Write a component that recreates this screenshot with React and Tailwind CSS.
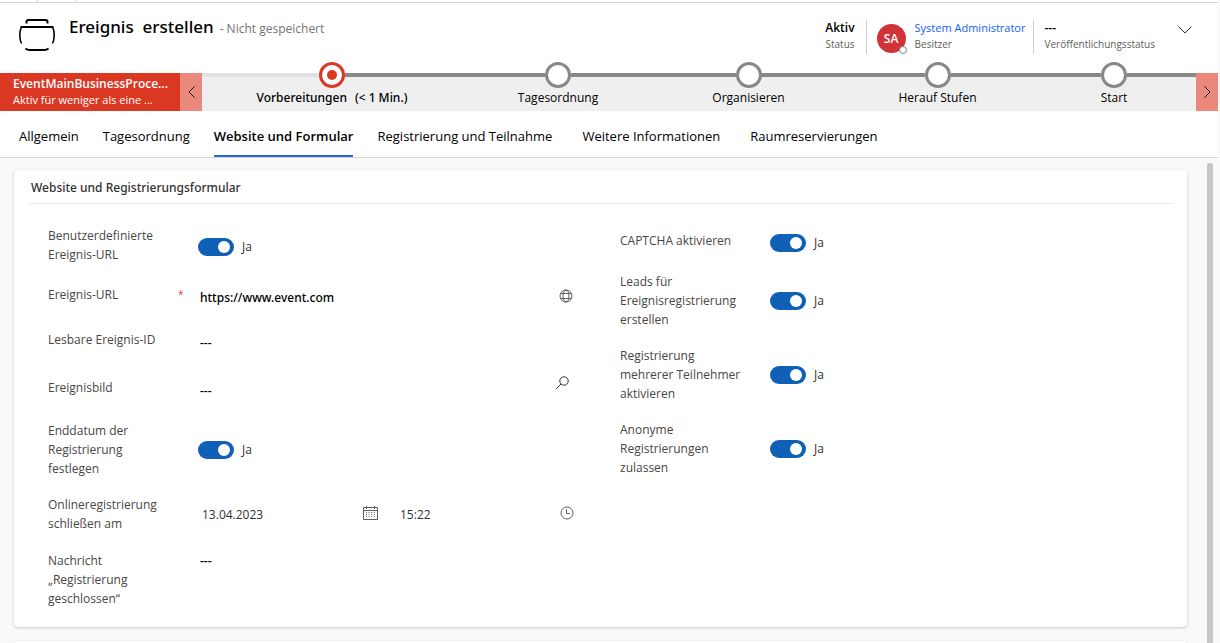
import { useState } from 'react';

const tabs = [
  { name: 'Allgemein', gap: 'mr-6' },
  { name: 'Tagesordnung', gap: 'mr-6' },
  { name: 'Website und Formular', gap: 'mr-6' },
  { name: 'Registrierung und Teilnahme', gap: 'mr-[30px]' },
  { name: 'Weitere Informationen', gap: 'mr-[30px]' },
  { name: 'Raumreservierungen', gap: '' },
];

const stages = [
  { name: 'Vorbereitungen', duration: '(< 1 Min.)', active: true },
  { name: 'Tagesordnung' },
  { name: 'Organisieren' },
  { name: 'Herauf Stufen' },
  { name: 'Start' },
];

export default function App() {
  const [activeTab, setActiveTab] = useState('Website und Formular');

  return (
    <div className="flex flex-col h-screen overflow-hidden bg-white border-r-2 border-[#faf9f8] font-['Open_Sans','Noto_Sans',sans-serif] text-xs text-[#323130]">
      <div className="flex shrink-0 h-[3px] border-b border-[#d6d6d6]">
        <div className="w-[38px] border-r border-[#d6d6d6]" />
        <div className="w-[39px] border-r border-[#d6d6d6]" />
      </div>

      <RecordHeader />
      <ProcessBar />

      <nav className="flex shrink-0 h-[47px] pl-[19px] border-b border-[#d6d6d6]">
        {tabs.map((tab) => (
          <button
            key={tab.name}
            onClick={() => setActiveTab(tab.name)}
            className={`h-[46px] pt-2 border-b-2 text-[13px] text-black whitespace-nowrap ${tab.gap} ${activeTab === tab.name ? 'border-[#2266e3] font-semibold' : 'border-transparent'}`}
          >
            {tab.name}
          </button>
        ))}
      </nav>

      <main className="flex flex-1 min-h-0 bg-[#faf9f8]">
        <div className="flex-1 min-w-0 pt-3 pl-[14px] pr-5 overflow-hidden">
          <FormSection />
          <div className="mt-[14px] h-10 bg-white rounded shadow-[0_1px_3px_rgba(0,0,0,0.2)]" />
        </div>
        <div className="w-[6px] mt-[5px] mr-[5px] bg-[#c8c6c4] rounded-t-full" />
      </main>
    </div>
  );
}

function RecordHeader() {
  return (
    <header className="flex shrink-0 items-start h-[70px] pl-[19px] pr-[26px]">
      <svg className="w-9 h-[33px] mt-4" viewBox="0 0 36 33" fill="none" stroke="#000">
        <path d="M7.500 4.500V3Q7.500 1 9.500 1H26.500Q28.500 1 28.500 3V4.500" strokeWidth="2" />
        <path d="M1.500 8H34.500" strokeWidth="2" />
        <path d="M2.500 8C1 11 0.800 13 0.800 16C0.800 19 1.200 22 2.500 24.500M33.500 8C35 11 35.200 13 35.200 16C35.200 19 34.800 22 33.500 24.500" strokeWidth="1.600" />
        <path d="M6.500 29.500Q8 31 11 31H25Q28 31 29.500 29.500" strokeWidth="1.800" />
      </svg>
      <h1 className="flex items-baseline ml-[14px] mt-[11px] leading-[26px] whitespace-pre">
        <span className="text-[17px] font-['Noto_Sans'] font-medium text-black">Ereignis  erstellen</span>
        <span className="ml-[6px] text-xs text-[#767472]">- Nicht gespeichert</span>
      </h1>

      <div className="flex ml-auto mt-[17px] h-[34px] leading-4 text-[10px] text-[#605e5c]">
        <div className="pr-[11px] border-r border-[#d2d0ce] text-right">
          <p className="text-xs leading-4 font-semibold text-black">Aktiv</p>
          <p>Status</p>
        </div>
        <div className="flex pl-[10px] pr-2 border-r border-[#d2d0ce]">
          <div className="relative flex items-center justify-center w-[29px] h-[29px] mt-1 mr-[9px] rounded-full bg-[#d13438] text-xs font-semibold text-white">
            SA
            <span className="absolute -right-[1px] -bottom-[1px] w-2 h-2 rounded-full border border-[#8a8886] bg-white" />
          </div>
          <div>
            <a href="#owner" className="block text-[11px] leading-4 text-[#1160f7]">System Administrator</a>
            <p>Besitzer</p>
          </div>
        </div>
        <div className="pl-[10px]">
          <p className="text-xs leading-4 font-semibold text-black">---</p>
          <p>Veröffentlichungsstatus</p>
        </div>
      </div>
      <button aria-label="Kopfzeile erweitern" className="ml-[23px] mt-[23px]">
        <svg className="w-[14px] h-2" viewBox="0 0 14 8" fill="none" stroke="#323130">
          <path d="M0.500 0.500L7 7L13.500 0.500" />
        </svg>
      </button>
    </header>
  );
}

function ProcessBar() {
  return (
    <div className="flex shrink-0 h-[38px] bg-[#efefef]">
      <div className="w-[180px] shrink-0 pl-[13px] pt-[3px] bg-[#db3823] text-white whitespace-nowrap">
        <p className="text-xs leading-4 font-semibold">EventMainBusinessProce...</p>
        <p className="text-[11px] leading-4">Aktiv für weniger als eine ...</p>
      </div>
      <button aria-label="Zurück" className="flex items-center justify-center w-[22px] bg-[#ea887b]">
        <svg className="w-[7px] h-3" viewBox="0 0 7 12" fill="none" stroke="#000">
          <path d="M6.500 0.500L1 6L6.500 11.500" />
        </svg>
      </button>
      <ol className="grid flex-1 grid-cols-[260fr_192fr_189fr_189fr_164fr]">
        {stages.map((stage) => (
          <li key={stage.name} className="flex flex-col items-center -mt-[11px]">
            <div className="flex items-center w-full h-[26px]">
              <div className={`flex-1 h-1 ${stage.active ? 'bg-[#e1e1e1]' : 'bg-[#8a8886]'}`} />
              <button
                aria-label={stage.name}
                className={`flex items-center justify-center w-[26px] h-[26px] rounded-full bg-white border-[3px] ${stage.active ? 'border-[#db3823]' : 'border-[#8a8886]'}`}
              >
                {stage.active && <span className="w-[10px] h-[10px] rounded-full bg-[#db3823]" />}
              </button>
              <div className="flex-1 h-1 bg-[#8a8886]" />
            </div>
            <p className="flex gap-2 leading-5 text-black whitespace-nowrap">
              <span className={stage.active ? "font-['Noto_Sans'] font-medium" : ''}>{stage.name}</span>
              {stage.duration && <span className="font-['Noto_Sans'] font-medium">{stage.duration}</span>}
            </p>
          </li>
        ))}
      </ol>
      <button aria-label="Weiter" className="flex items-center justify-center w-[22px] bg-[#ea887b]">
        <svg className="w-[7px] h-3" viewBox="0 0 7 12" fill="none" stroke="#000">
          <path d="M0.500 0.500L6 6L0.500 11.500" />
        </svg>
      </button>
    </div>
  );
}

function FormSection() {
  return (
    <section className="pl-[15px] pr-[14px] pt-2 pb-[19px] bg-white rounded shadow-[0_1px_3px_rgba(0,0,0,0.2)]">
      <h2 className="h-[26px] pl-[2px] leading-5 text-xs font-['Noto_Sans'] font-medium border-b border-[#edebe9]">
        Website und Registrierungsformular
      </h2>
      <form className="grid grid-cols-2">
        <div className="flex flex-col gap-[17px] pt-[22px] pl-[19px] pr-5">
          <Field id="custom-url" label="Benutzerdefinierte Ereignis-URL" height="min-h-[42px]">
            <Toggle id="custom-url" />
          </Field>
          <Field id="event-url" label="Ereignis-URL" height="min-h-[28px]" align="items-start" required>
            <TextInput id="event-url" value="https://www.event.com" />
            <button type="button" aria-label="URL öffnen" className="mt-1 mr-2">
              <GlobeIcon />
            </button>
          </Field>
          <Field id="readable-id" label="Lesbare Ereignis-ID" height="min-h-[31px]" align="items-start">
            <TextInput id="readable-id" value="---" />
          </Field>
          <Field id="image" label="Ereignisbild" height="min-h-[26px]" align="items-start">
            <TextInput id="image" value="---" />
            <button type="button" aria-label="Suchen" className="mr-3 -mt-[2px]">
              <SearchIcon />
            </button>
          </Field>
          <Field id="end-date" label="Enddatum der Registrierung festlegen" height="min-h-[57px]">
            <Toggle id="end-date" />
          </Field>
          <Field id="close-date" label="Onlineregistrierung schließen am" height="min-h-[39px]">
            <input id="close-date" defaultValue="13.04.2023" className="w-[165px] pl-1 outline-none" />
            <button type="button" aria-label="Kalender öffnen" className="mb-1">
              <CalendarIcon />
            </button>
            <input aria-label="Uhrzeit" defaultValue="15:22" className="flex-1 min-w-0 ml-[22px] outline-none" />
            <button type="button" aria-label="Uhrzeit auswählen" className="mr-[7px] mb-1">
              <ClockIcon />
            </button>
          </Field>
          <Field id="message" label="Nachricht „Registrierung geschlossen“" height="min-h-[57px]" align="items-start">
            <input id="message" defaultValue="---" className="flex-1 min-w-0 pt-[2px] pl-[2px] font-semibold text-black outline-none" />
          </Field>
        </div>

        <div className="flex flex-col gap-[17px] pt-[27px] pl-[19px]">
          <Field id="captcha" label="CAPTCHA aktivieren" height="min-h-[24px]">
            <Toggle id="captcha" />
          </Field>
          <Field id="leads" label="Leads für Ereignisregistrierung erstellen" height="min-h-[57px]">
            <Toggle id="leads" />
          </Field>
          <Field id="multiple" label="Registrierung mehrerer Teilnehmer aktivieren" height="min-h-[57px]">
            <Toggle id="multiple" />
          </Field>
          <Field id="anonymous" label="Anonyme Registrierungen zulassen" height="min-h-[57px]">
            <Toggle id="anonymous" />
          </Field>
        </div>
      </form>
    </section>
  );
}

function Field({ id, label, height, required, align = 'items-center', children }) {
  return (
    <div className={`flex ${height}`}>
      <label htmlFor={id} className="w-[122px] shrink-0 leading-[19px] text-[#484644]">{label}</label>
      <span className="w-7 shrink-0 pl-2 text-[10px] leading-[19px] text-[#e0393e]">{required && '*'}</span>
      <div className={`flex flex-1 min-w-0 ${align}`}>{children}</div>
    </div>
  );
}

function TextInput({ id, value }) {
  return <input id={id} defaultValue={value} className="flex-1 min-w-0 pt-[5px] pl-[2px] font-['Noto_Sans'] font-medium text-black outline-none" />;
}

function Toggle({ id }) {
  const [on, setOn] = useState(true);

  return (
    <>
      <input
        id={id}
        type="checkbox"
        role="switch"
        checked={on}
        onChange={() => setOn(!on)}
        className="flex items-center justify-start w-9 h-[18px] px-1 rounded-full appearance-none bg-[#8a8886] checked:justify-end checked:bg-[#1160b7] before:w-3 before:h-3 before:rounded-full before:bg-white"
      />
      <span className="ml-2">{on ? 'Ja' : 'Nein'}</span>
    </>
  );
}

function GlobeIcon() {
  return (
    <svg className="w-[14px] h-[14px]" viewBox="0 0 14 14" fill="none" stroke="#605e5c">
      <circle cx="7" cy="7" r="6" />
      <ellipse cx="7" cy="7" rx="3" ry="6" />
      <path d="M1.500 4.500H12.500M1.500 9.500H12.500" />
    </svg>
  );
}

function SearchIcon() {
  return (
    <svg className="w-[14px] h-[14px]" viewBox="0 0 14 14" fill="none" stroke="#323130">
      <circle cx="9" cy="5" r="4.200" />
      <path d="M6 8L0.800 13.200" />
    </svg>
  );
}

function CalendarIcon() {
  return (
    <svg className="w-[15px] h-[14px]" viewBox="0 0 15 14" fill="none" stroke="#605e5c">
      <path d="M0.500 1.500H14.500V13.500H0.500ZM0.500 4.500H14.500M3.500 0V3M11.500 0V3" />
      <path d="M3 6.500H12M3 8.500H12M3 10.500H12" strokeDasharray="1 1.600" />
    </svg>
  );
}

function ClockIcon() {
  return (
    <svg className="w-[14px] h-[14px]" viewBox="0 0 14 14" fill="none" stroke="#605e5c">
      <circle cx="7" cy="7" r="6" />
      <path d="M6.500 3V7.500H10" />
    </svg>
  );
}
